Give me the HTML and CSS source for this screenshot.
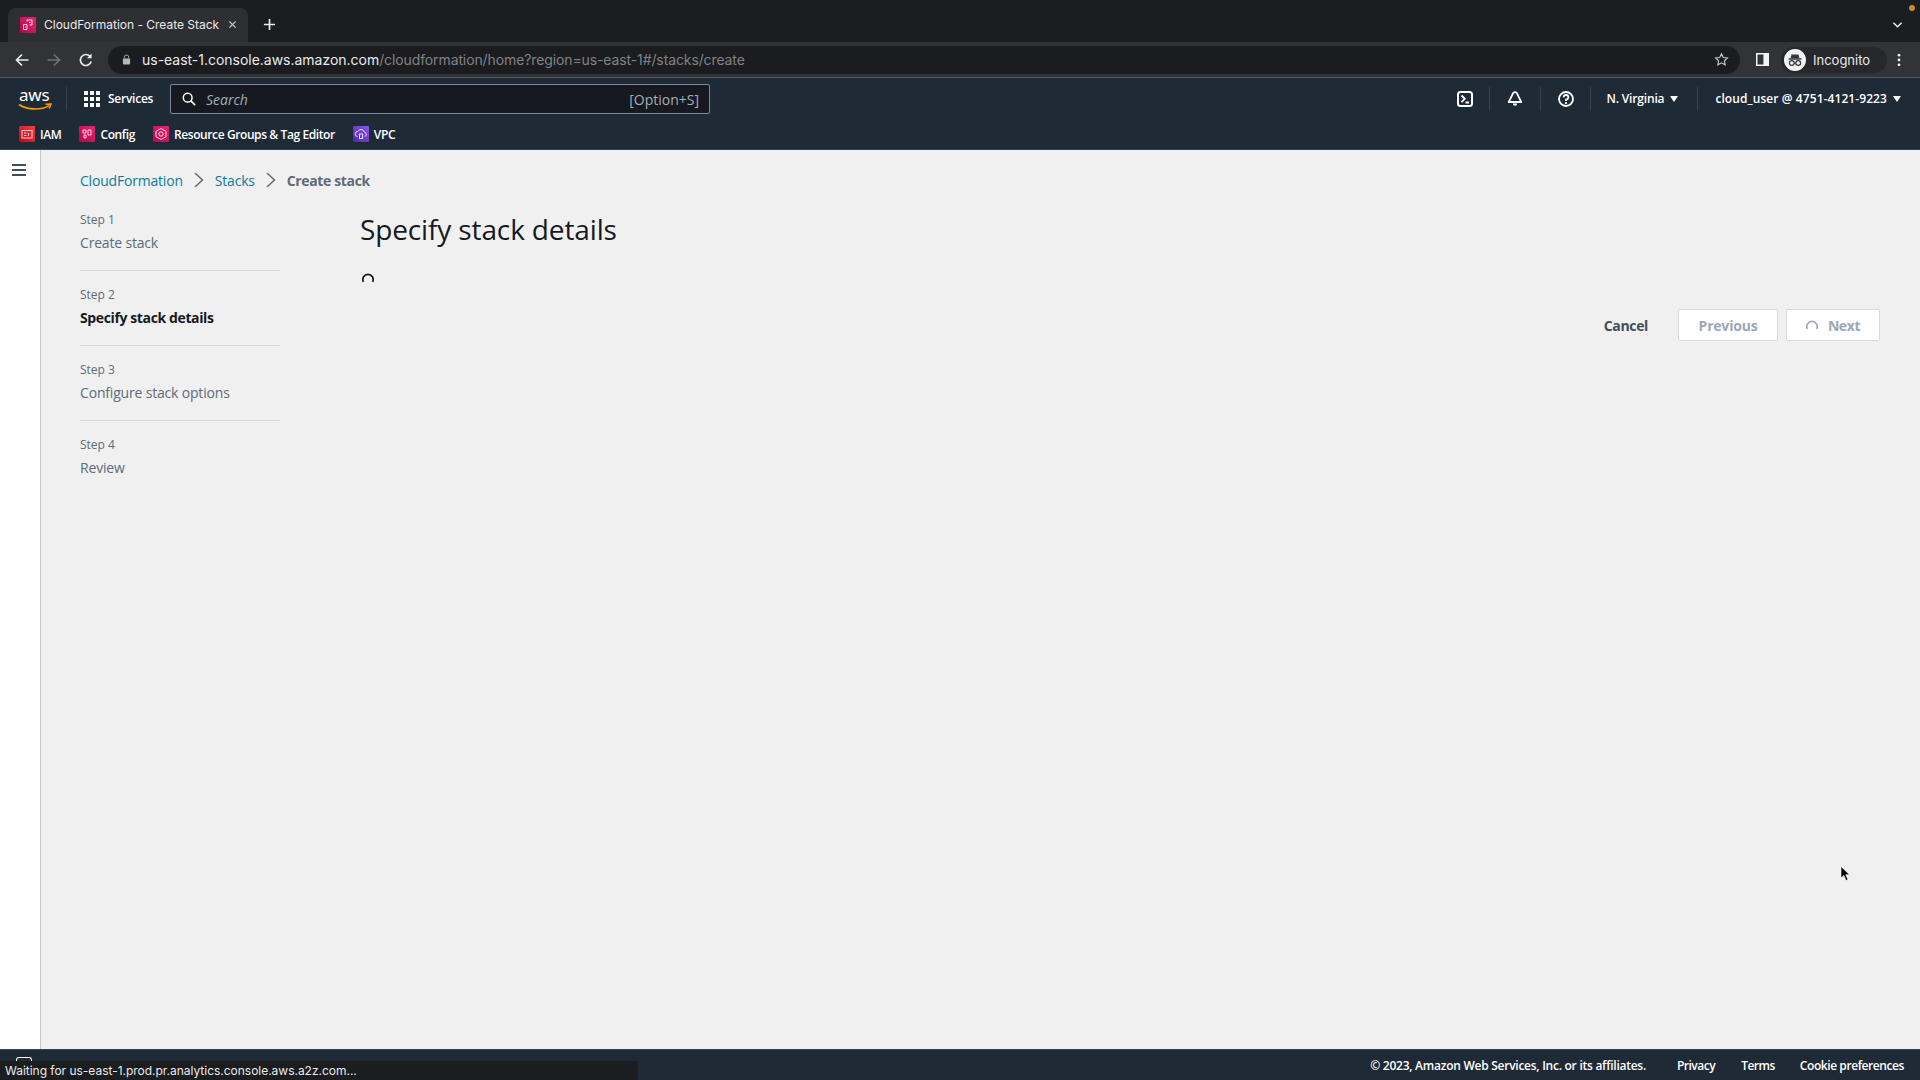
FILE: index.html
```html
<!DOCTYPE html>
<html lang="en">
<head>
<meta charset="utf-8">
<title>CloudFormation - Create Stack</title>
<link rel="stylesheet" href="styles.css">
</head>
<body>
<header class="chrome">
  <div class="tabstrip">
    <div class="tab">
      <span class="favicon fav-pink"><svg viewBox="0 0 16 16" class="fav-glyph"><path d="M3.500 7.500h3.500v5h-3.500zM7 4.500V3h5v5H9.500" fill="none" stroke="#ffd5e6" stroke-width="1"/><path d="M9 5.500h1.500M5 10h1" stroke="#ffd5e6" stroke-width="1"/></svg></span>
      <span class="tab-title">CloudFormation - Create Stack</span>
      <svg class="tab-close" viewBox="0 0 10 10"><path d="M1.5 1.5l7 7M8.5 1.5l-7 7" stroke="#c8cacc" stroke-width="1.4"/></svg>
    </div>
    <svg class="new-tab" viewBox="0 0 14 14"><path d="M7 1v12M1 7h12" stroke="#e8eaed" stroke-width="1.8"/></svg>
    <svg class="tab-list" viewBox="0 0 12 8"><path d="M1.5 1.5L6 6l4.5-4.5" fill="none" stroke="#e8eaed" stroke-width="1.6"/></svg>
    <span class="orange-dot"></span>
  </div>
  <div class="toolbar">
    <svg class="tool-btn" viewBox="0 0 16 16"><path d="M14.5 8H2.5M8 2.5L2.5 8 8 13.5" fill="none" stroke="#e8eaed" stroke-width="1.7"/></svg>
    <svg class="tool-btn" viewBox="0 0 16 16"><path d="M1.5 8h12M8 2.5L13.5 8 8 13.5" fill="none" stroke="#6f7174" stroke-width="1.7"/></svg>
    <svg class="tool-btn" viewBox="0 0 16 16"><path d="M13.2 9.5A5.5 5.5 0 1 1 12 4.3" fill="none" stroke="#e8eaed" stroke-width="1.7"/><path d="M13.6 1.6v4.6H9z" fill="#e8eaed"/></svg>
    <div class="omnibox">
      <svg class="lock" viewBox="0 0 10 12"><path d="M2.5 5V3.5a2.5 2.5 0 0 1 5 0V5" fill="none" stroke="#b5b7ba" stroke-width="1"/><rect x="1" y="5" width="8" height="6.5" rx="1" fill="#b5b7ba"/></svg>
      <span class="url"><span class="url-host">us-east-1.console.aws.amazon.com</span><span class="url-path">/cloudformation/home?region=us-east-1#/stacks/create</span></span>
      <svg class="star" viewBox="0 0 16 16"><path d="M8 1.8l1.9 4 4.4.5-3.2 3 .8 4.4L8 11.6l-3.9 2.1.8-4.4-3.2-3 4.4-.5z" fill="none" stroke="#c4c6c9" stroke-width="1.2"/></svg>
    </div>
    <svg class="side-panel" viewBox="0 0 14 14"><rect x="0.8" y="0.8" width="12.4" height="12.4" fill="none" stroke="#f1f3f4" stroke-width="1.6"/><rect x="8" y="1" width="5" height="12" fill="#f1f3f4"/></svg>
    <div class="profile">
      <span class="avatar"><svg viewBox="0 0 22 22"><path d="M7.5 5.5h7l1 4h-9z" fill="#35363a"/><path d="M4.5 10h13" stroke="#35363a" stroke-width="1.4"/><circle cx="7.8" cy="14" r="2.4" fill="none" stroke="#35363a" stroke-width="1.2"/><circle cx="14.2" cy="14" r="2.4" fill="none" stroke="#35363a" stroke-width="1.2"/><path d="M10 14h2" stroke="#35363a" stroke-width="1"/></svg></span>
      <span class="profile-name">Incognito</span>
    </div>
    <svg class="kebab" viewBox="0 0 4 16"><circle cx="2" cy="2.5" r="1.6" fill="#e8eaed"/><circle cx="2" cy="8" r="1.6" fill="#e8eaed"/><circle cx="2" cy="13.5" r="1.6" fill="#e8eaed"/></svg>
  </div>
</header>

<nav class="console-nav">
  <div class="nav-top">
    <a class="aws-logo"><span class="aws-word">aws</span><svg viewBox="0 0 34 8" class="aws-smile"><path d="M1 1.5C9 7 23 7.5 31 2.6" fill="none" stroke="#f90" stroke-width="1.7"/><path d="M27.5 1.2L33 1l-1.8 4.6" fill="none" stroke="#f90" stroke-width="1.5"/></svg></a>
    <span class="nav-sep nav-sep-logo"></span>
    <svg class="grid-icon" viewBox="0 0 16 16"><g fill="#fff"><rect x="0" y="0" width="4" height="4"/><rect x="6" y="0" width="4" height="4"/><rect x="12" y="0" width="4" height="4"/><rect x="0" y="6" width="4" height="4"/><rect x="6" y="6" width="4" height="4"/><rect x="12" y="6" width="4" height="4"/><rect x="0" y="12" width="4" height="4"/><rect x="6" y="12" width="4" height="4"/><rect x="12" y="12" width="4" height="4"/></g></svg>
    <span class="services">Services</span>
    <div class="search">
      <svg class="search-icon" viewBox="0 0 16 16"><circle cx="6.5" cy="6.5" r="5" fill="none" stroke="#fff" stroke-width="1.7"/><path d="M10.2 10.2L15 15" stroke="#fff" stroke-width="2"/></svg>
      <span class="search-text">Search</span>
      <span class="search-key">[Option+S]</span>
    </div>
    <div class="nav-right">
      <svg class="nav-icon" viewBox="0 0 16 16"><rect x="1" y="1" width="14" height="14" rx="2.500" fill="none" stroke="#fff" stroke-width="2"/><path d="M4.500 4.500L7.800 7.800l-3.300 3.300M8.500 11.500h3.500" fill="none" stroke="#fff" stroke-width="1.800"/></svg>
      <span class="nav-sep sep-a"></span>
      <svg class="nav-icon icon-bell" viewBox="0 0 16 16"><path d="M8 1.200c1.600 0 2.300 1.200 2.800 3l3.500 6.800H1.700l3.500-6.800c.5-1.800 1.200-3 2.800-3z" fill="none" stroke="#fff" stroke-width="1.800" stroke-linejoin="round"/><path d="M5.800 12.500a2.200 2.200 0 0 0 4.400 0z" fill="#fff"/></svg>
      <span class="nav-sep sep-b"></span>
      <svg class="nav-icon icon-help" viewBox="0 0 16 16"><circle cx="8" cy="8" r="7" fill="none" stroke="#fff" stroke-width="1.800"/><path d="M5.700 6.200A2.300 2.300 0 1 1 8 8.600V10" fill="none" stroke="#fff" stroke-width="1.800"/><circle cx="8" cy="12.200" r="1.100" fill="#fff"/></svg>
      <span class="nav-sep sep-c"></span>
      <span class="nav-menu region">N. Virginia<i class="caret"></i></span>
      <span class="nav-sep sep-d"></span>
      <span class="nav-menu account">cloud_user @ 4751-4121-9223<i class="caret"></i></span>
    </div>
  </div>
  <div class="bookmarks">
    <a class="bookmark bm-iam"><span class="favicon small fav-red"><svg class="fav-glyph" viewBox="0 0 16 16"><rect x="3" y="4.500" width="10" height="7.500" fill="none" stroke="#ffc9c9" stroke-width="1"/><path d="M5 7h2.500M5 9.500h2.500M9.500 7v3" stroke="#ffc9c9" stroke-width="1"/></svg></span>IAM</a>
    <a class="bookmark bm-config"><span class="favicon small fav-pink"><svg class="fav-glyph" viewBox="0 0 16 16"><path d="M4 4h3v3H4zM9 4h3v5H9zM5 9h2v3H5z" fill="none" stroke="#ffd5e6" stroke-width="1"/></svg></span>Config</a>
    <a class="bookmark bm-rg"><span class="favicon small fav-pink"><svg class="fav-glyph" viewBox="0 0 16 16"><path d="M8 2.500l5 2.800v5.400L8 13.500l-5-2.800V5.300z" fill="none" stroke="#ffd5e6" stroke-width="1"/><circle cx="8" cy="8" r="2.200" fill="none" stroke="#ffd5e6" stroke-width="1"/></svg></span>Resource Groups &amp; Tag Editor</a>
    <a class="bookmark bm-vpc"><span class="favicon small fav-purple"><svg class="fav-glyph" viewBox="0 0 16 16"><path d="M4.500 10.500a2.500 2.500 0 0 1 .3-5A3.500 3.500 0 0 1 11.300 6a2.300 2.300 0 0 1 .2 4.500" fill="none" stroke="#e5d5ff" stroke-width="1"/><rect x="6.500" y="8" width="3" height="4.500" fill="none" stroke="#e5d5ff" stroke-width="1"/></svg></span>VPC</a>
  </div>
</nav>

<div class="app">
  <aside class="side-rail">
    <svg class="hamburger" viewBox="0 0 14 12"><path d="M0 1h14M0 6h14M0 11h14" stroke="#414d5c" stroke-width="2"/></svg>
  </aside>
  <main class="content">
    <ol class="breadcrumbs">
      <li class="crumb-link">CloudFormation</li>
      <li class="crumb-sep"><svg viewBox="0 0 10 16"><path d="M1 1l7.500 7L1 15" fill="none" stroke="#5f6b7a" stroke-width="1.500"/></svg></li>
      <li class="crumb-link">Stacks</li>
      <li class="crumb-sep"><svg viewBox="0 0 10 16"><path d="M1 1l7.500 7L1 15" fill="none" stroke="#5f6b7a" stroke-width="1.500"/></svg></li>
      <li class="crumb-current">Create stack</li>
    </ol>
    <div class="wizard">
      <ol class="steps">
        <li class="step"><small>Step 1</small><span>Create stack</span></li>
        <li class="step current"><small>Step 2</small><span>Specify stack details</span></li>
        <li class="step"><small>Step 3</small><span>Configure stack options</span></li>
        <li class="step"><small>Step 4</small><span>Review</span></li>
      </ol>
      <section class="form">
        <h1>Specify stack details</h1>
        <svg class="spinner" viewBox="0 0 14 14"><path d="M1.700 11.500A6 6 0 1 1 12.300 11.500" fill="none" stroke="#16191f" stroke-width="2"/></svg>
        <div class="actions">
          <span class="cancel">Cancel</span>
          <button class="btn" type="button">Previous</button>
          <button class="btn btn-next" type="button"><svg class="btn-spin" viewBox="0 0 14 14"><path d="M1.700 11.500A6 6 0 1 1 12.300 11.500" fill="none" stroke="#9ba7b6" stroke-width="1.900"/></svg>Next</button>
        </div>
      </section>
    </div>
  </main>
</div>

<footer class="console-footer">
  <span class="copyright">© 2023, Amazon Web Services, Inc. or its affiliates.</span>
  <a class="foot-privacy">Privacy</a>
  <a class="foot-terms">Terms</a>
  <a class="foot-cookie">Cookie preferences</a>
</footer>

<span class="shell-peek"></span>
<div class="status-bubble">Waiting for us-east-1.prod.pr.analytics.console.aws.a2z.com...</div>
<svg class="cursor" viewBox="0 0 10 16"><path d="M1 0.500V12l2.800-2.600L6 14.500l2-.9L5.800 8.700H9.500z" fill="#000" stroke="#fff" stroke-width="0.600"/></svg>
</body>
</html>
```

FILE: styles.css
```css
* { box-sizing: border-box; }
html, body { height: 100%; }
body {
  margin: 0;
  height: 1080px;
  overflow: hidden;
  display: flex;
  flex-direction: column;
  background: #f0f0f0;
  font-family: "Open Sans", "Noto Sans", sans-serif;
  color: #16191f;
  position: relative;
}
ol { list-style: none; margin: 0; padding: 0; }

/* browser chrome */
.chrome { flex: none; height: 78px; }
.tabstrip {
  height: 42px;
  background: #1c1d1f;
  display: flex;
  align-items: flex-end;
  padding-left: 8px;
  position: relative;
}
.tab {
  width: 240px;
  height: 34px;
  background: #2e2f32;
  border-radius: 8px 8px 0 0;
  display: flex;
  align-items: center;
  padding: 0 0 1px 12px;
  font-family: Inter, Roboto, sans-serif;
  font-size: 12px;
  color: #e8eaed;
}
.favicon {
  width: 16px;
  height: 16px;
  flex: none;
  border-radius: 1px;
  display: inline-flex;
}
.fav-glyph { width: 16px; height: 16px; }
.fav-pink { background: linear-gradient(45deg, #b0084d, #e7266f); }
.fav-red { background: linear-gradient(45deg, #bd0816, #ee3f4a); }
.fav-purple { background: linear-gradient(45deg, #4d27a8, #8f56ea); }
.tab-title { margin-left: 8px; width: 175px; white-space: nowrap; letter-spacing: -0.01px; }
.tab-close { width: 9px; height: 9px; margin-left: 9px; }
.new-tab { width: 13px; height: 13px; margin: 0 0 11px 15px; }
.tab-list { width: 11px; height: 8px; margin: 0 0 13px auto; position: absolute; right: 17px; bottom: 0; }
.orange-dot {
  position: absolute;
  right: 5px;
  top: 5px;
  width: 6px;
  height: 6px;
  border-radius: 50%;
  background: #d08a2e;
}
.toolbar {
  height: 36px;
  background: #323337;
  border-bottom: 1px solid #57585b;
  display: flex;
  align-items: center;
  padding-left: 14px;
}
.tool-btn { width: 16px; height: 16px; margin-right: 16px; flex: none; }
.omnibox {
  margin-left: -2px;
  width: 1632px;
  height: 28px;
  border-radius: 14px;
  background: #1b1c1f;
  display: flex;
  align-items: center;
  padding-left: 14px;
}
.lock { width: 9px; height: 11px; flex: none; }
.url { margin-left: 11px; font-family: Inter, Roboto, sans-serif; font-size: 14px; white-space: nowrap; }
.url-host { color: #e8eaed; letter-spacing: -0.02px; }
.url-path { color: #808285; letter-spacing: -0.11px; }
.star { width: 15px; height: 15px; margin-left: auto; margin-right: 11px; flex: none; }
.side-panel { width: 13px; height: 13px; margin-left: 16px; flex: none; }
.profile {
  margin-left: 12px;
  width: 106px;
  height: 26px;
  border-radius: 13px;
  background: #27282b;
  display: flex;
  align-items: center;
  padding-left: 3px;
}
.avatar { width: 22px; height: 22px; border-radius: 50%; background: #f1f3f4; flex: none; display: flex; }
.avatar svg { width: 22px; height: 22px; }
.profile-name { margin-left: 7px; font-family: Inter, Roboto, sans-serif; font-size: 13px; color: #e8eaed; }
.kebab { width: 4px; height: 14px; margin-left: 10px; flex: none; }

/* console nav */
.console-nav { flex: none; height: 72px; background: #1f2a37; color: #fff; border-bottom: 1px solid #3a4450; }
.nav-top { height: 41px; display: flex; align-items: center; padding-left: 18px; }
.aws-logo { width: 34px; height: 24px; position: relative; display: block; margin-top: -1px; }
.aws-word { display: block; font-family: "Noto Sans", sans-serif; font-size: 17px; line-height: 17px; color: #fff; letter-spacing: -0.2px; padding-left: 1px; }
.aws-smile { display: block; width: 34px; height: 8px; }
.nav-sep { width: 1px; height: 24px; background: #36414e; flex: none; }
.nav-sep-logo { margin-left: 14px; }
.grid-icon { width: 16px; height: 16px; margin-left: 17px; flex: none; }
.services { margin-left: 8px; font-size: 12px; font-weight: 600; letter-spacing: -0.25px; width: 46px; white-space: nowrap; }
.search {
  margin-left: 16px;
  width: 540px;
  height: 30px;
  background: #16191f;
  border: 1px solid #7d8998;
  border-radius: 2px;
  display: flex;
  align-items: center;
  padding: 2px 10px 0 11px;
  font-size: 14px;
}
.search-icon { width: 14px; height: 14px; flex: none; margin-top: -2px; }
.search-text { margin-left: 10px; font-style: italic; color: #a5adb8; font-size: 14px; }
.search-key { margin-left: auto; color: #a5adb8; font-size: 14px; }
.nav-right { margin-left: auto; display: flex; align-items: center; padding-right: 19px; }
.nav-icon { width: 16px; height: 16px; flex: none; }
.sep-a { margin: 0 17px 0 16px; }
.sep-b { margin: 0 17px; }
.sep-c { margin: 0 16px 0 16px; }
.sep-d { margin: 0 17px 0 19px; }
.nav-menu { font-size: 12px; font-weight: 600; display: flex; align-items: center; white-space: nowrap; letter-spacing: 0.08px; }
.nav-menu.region { letter-spacing: -0.17px; }
.caret { width: 0; height: 0; margin-left: 6px; border-left: 4.500px solid transparent; border-right: 4.500px solid transparent; border-top: 6px solid #fff; }
.bookmarks { height: 30px; display: flex; align-items: flex-start; padding: 7px 0 0 19px; font-size: 12px; font-weight: 600; letter-spacing: -0.4px; }
.bookmark { display: flex; align-items: center; height: 16px; margin-right: 18px; }
.bookmark .favicon { margin-right: 5px; }

/* page */
.app { flex: 1; min-height: 0; display: flex; }
.side-rail { width: 41px; flex: none; background: #fff; border-right: 1px solid #c6c6cd; padding: 14px 0 0 12px; }
.hamburger { width: 14px; height: 12px; display: block; }
.content { flex: 1; padding: 20px 40px 0 39px; }
.breadcrumbs { display: flex; align-items: center; height: 20px; font-size: 14px; letter-spacing: -0.2px; }
.crumb-link { color: #0f7a9e; }
.crumb-current { color: #5f6b7a; font-weight: 700; letter-spacing: -0.36px; }
.crumb-sep { width: 32px; display: flex; justify-content: center; }
.crumb-sep svg { width: 10px; height: 16px; display: block; }
.wizard { display: flex; margin-top: 6px; }
.steps { width: 200px; flex: none; }
.step { height: 75px; border-bottom: 1px solid #d5dbdb; padding-top: 14px; font-size: 14px; color: #5f6b7a; display: flex; flex-direction: column; letter-spacing: -0.18px; }
.step:last-child { border-bottom: 0; }
.step small { font-size: 12px; line-height: 20px; letter-spacing: 0; }
.step span { line-height: 20px; margin-top: 3px; white-space: nowrap; }
.step.current span { color: #16191f; font-weight: 700; letter-spacing: -0.38px; }
.form { flex: 1; margin-left: 80px; display: flex; flex-direction: column; }
.form h1 { margin: 13px 0 0; font-size: 28px; font-weight: 400; line-height: 40px; color: #16191f; letter-spacing: -0.13px; }
.spinner { width: 12px; height: 12px; margin: 23px 0 0 2px; display: block; }
.actions { display: flex; justify-content: flex-end; align-items: center; margin-top: 25px; }
.cancel { font-size: 14px; font-weight: 700; color: #414d5c; margin-right: 30px; letter-spacing: -0.35px; }
.btn {
  height: 32px;
  width: 100px;
  background: #fff;
  border: 1px solid #d5dbdb;
  border-radius: 2px;
  font: 700 14px "Open Sans", "Noto Sans", sans-serif;
  letter-spacing: -0.2px;
  color: #9ba7b6;
  display: flex;
  align-items: center;
  justify-content: center;
  padding: 0;
}
.btn-next { width: 94px; margin-left: 8px; letter-spacing: -0.4px; }
.btn-spin { width: 12px; height: 12px; margin-right: 10px; }

/* footer */
.console-footer {
  flex: none;
  height: 31px;
  background: #1f2a37;
  border-top: 1px solid #3a4450;
  color: #fff;
  font-size: 12px;
  font-weight: 600;
  display: flex;
  align-items: center;
  letter-spacing: -0.26px;
}
.copyright { margin-left: auto; }
.foot-privacy { margin-left: 31px; letter-spacing: -0.5px; }
.foot-terms { margin-left: 26px; letter-spacing: -0.5px; }
.foot-cookie { margin-left: 25px; margin-right: 16px; letter-spacing: -0.42px; }

/* overlays */
.shell-peek { position: absolute; left: 16px; top: 1057px; width: 16px; height: 5px; border: 1.500px solid #fff; border-bottom: 0; border-radius: 3px 3px 0 0; }
.status-bubble {
  position: absolute;
  left: 0;
  bottom: 0;
  width: 638px;
  height: 19px;
  background: #1c1d1f;
  border-top-right-radius: 3px;
  padding-left: 5px;
  font-family: Inter, Roboto, sans-serif;
  font-size: 12px;
  line-height: 19px;
  color: #e8eaed;
  white-space: nowrap;
  letter-spacing: -0.02px;
}
.cursor { position: absolute; left: 1840px; top: 866px; width: 10px; height: 16px; }
```
